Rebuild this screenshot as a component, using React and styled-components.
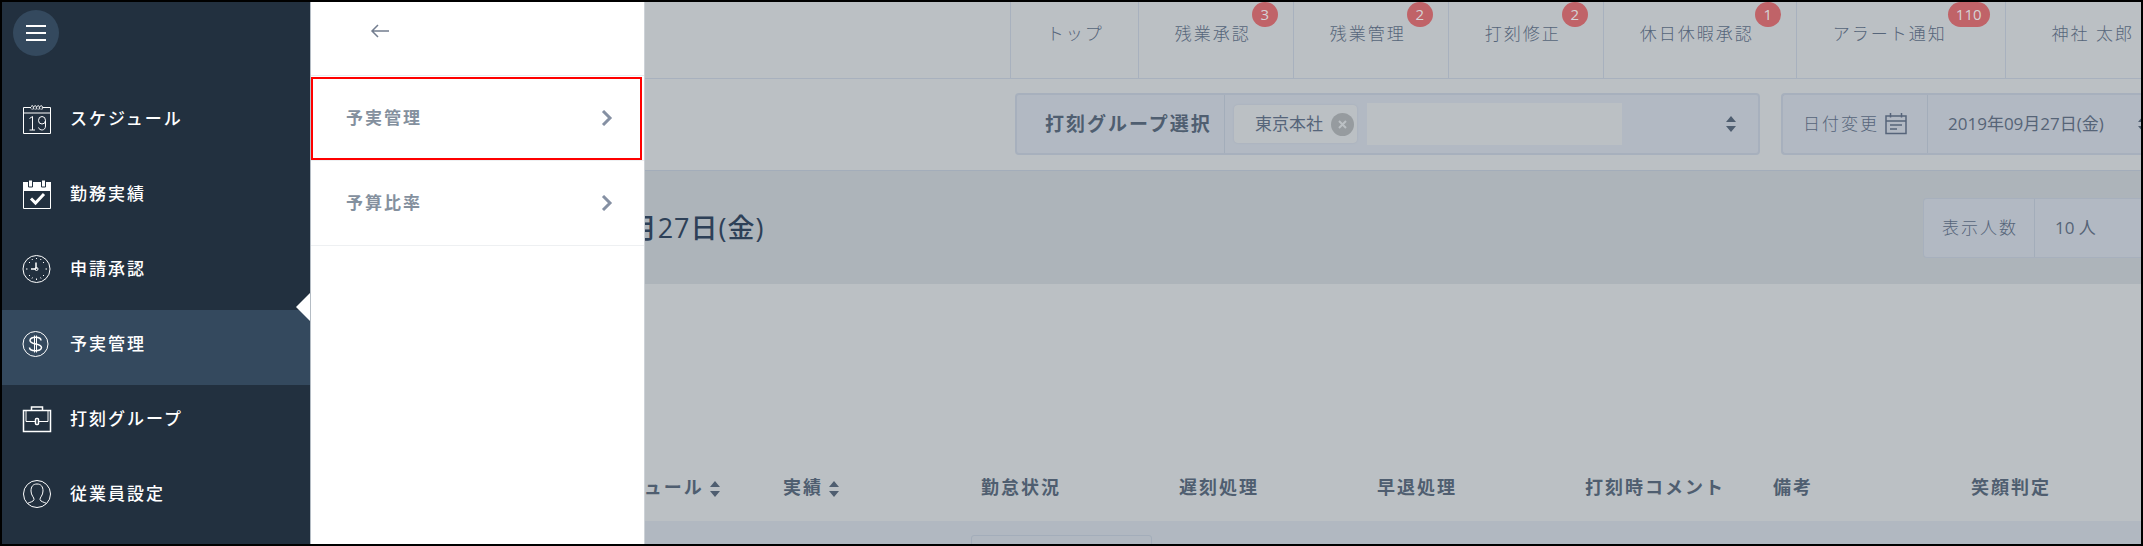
import styled, { createGlobalStyle, css } from "styled-components";

const menuItems = [
  { label: "スケジュール", Icon: ScheduleIcon },
  { label: "勤務実績", Icon: RecordIcon },
  { label: "申請承認", Icon: ClockIcon },
  { label: "予実管理", Icon: DollarIcon, active: true },
  { label: "打刻グループ", Icon: BagIcon },
  { label: "従業員設定", Icon: PersonIcon },
];

const subItems = [{ label: "予実管理", marked: true }, { label: "予算比率" }];

const topLinks = [
  { label: "トップ" },
  { label: "残業承認", count: 3 },
  { label: "残業管理", count: 2 },
  { label: "打刻修正", count: 2 },
  { label: "休日休暇承認", count: 1 },
  { label: "アラート通知", count: 110 },
];

const columns = [
  { label: "スケジュール", sort: true },
  { label: "実績", sort: true },
  { label: "勤怠状況" },
  { label: "遅刻処理" },
  { label: "早退処理" },
  { label: "打刻時コメント", indent: true },
  { label: "備考" },
  { label: "笑顔判定" },
];

function ScheduleIcon() {
  return (
    <MenuSvg viewBox="0 0 30 30">
      <path d="M9 3.5H1.5v26h27v-26H21M1.5 9h27" />
      <path d="M9 2.5c2-2 3 0 2 3M12 2.5c2-2 3 0 2 3M15 2.5c2-2 3 0 2 3M18 2.5c2-2 3 0 2 3M9 4.5l1 1M12 4.5l1 1M15 4.5l1 1M18 4.5l1 1" />
      <path d="M7.5 14.5l3-2V26M7.5 26h5.500M23.500 16.500a3.500 4 0 1 0-7 0a3.500 3.500 0 1 0 7 0v5.500c0 5-6 5-7 1.500" />
    </MenuSvg>
  );
}

function RecordIcon() {
  return (
    <MenuSvg viewBox="0 0 30 30">
      <path d="M1.500 4h27v25.500h-27z" />
      <path d="M1 3h28v9H1z" fill="#fff" stroke="none" />
      <path d="M6.500 1h4v7h-4zM19.500 1h4v7h-4z" fill="#fff" stroke="#22303f" />
      <path d="M9 19.500l4.500 4.500 8.500-9" strokeWidth="3" />
    </MenuSvg>
  );
}

function ClockIcon() {
  return (
    <MenuSvg viewBox="0 0 30 30">
      <circle cx="14.500" cy="15" r="13.500" />
      <path d="M14 8.500v6.500M9 15h5" strokeWidth="1.500" />
      <circle cx="14.500" cy="15" r="1.500" />
      <path
        d="M14.500 24.500v1.500M14.500 4v1M4 15h1.500M23.500 15H25M7 8l1 1M21 9l1-1M7 22l1-1M21 21l1 1M10 5l.5 1M19 5l-.5 1M10 24.500l.5-1M19 24.500l-.5-1"
      />
    </MenuSvg>
  );
}

function DollarIcon() {
  return (
    <MenuSvg viewBox="0 0 30 30">
      <circle cx="13.500" cy="15" r="12.500" />
      <path d="M12.500 6.500v17M14.500 6.500v17" />
      <path d="M19 11.500c0-4-11-4.500-11 0 0 4.500 11.500 2.500 11.500 7 0 4.500-12 4-12 0" strokeWidth="1.500" />
    </MenuSvg>
  );
}

function BagIcon() {
  return (
    <MenuSvg viewBox="0 0 30 30">
      <path d="M1.500 6.500h27v21h-27zM9.500 6V3h11v3" strokeWidth="1.500" />
      <path d="M4 7v10.500h9M16.500 17.500H26V7" />
      <rect x="13.500" y="14.500" width="3" height="6" rx="1" strokeWidth="1.500" />
    </MenuSvg>
  );
}

function PersonIcon() {
  return (
    <MenuSvg viewBox="0 0 30 30">
      <circle cx="15" cy="15" r="13.500" />
      <path d="M5.500 24.500c2-1.500 6-1.500 6.500-4 .3-2-3-4-3-8.500C9 7.500 11 5 15 5s6 2.500 6 7c0 4.500-3.300 6.500-3 8.500.5 2.500 4.500 2.500 6.500 4" />
    </MenuSvg>
  );
}

const SortIcon = () => (
  <SortSvg viewBox="0 0 10 16">
    <path d="M5 0l5 6H0zM5 16l5-6H0z" />
  </SortSvg>
);

const App = () => {
  return (
    <Page>
      <GlobalStyle />
      <Sidebar>
        <Burger aria-label="メニュー">
          <svg width="20" height="18" viewBox="0 0 20 18">
            <path d="M0 2h20M0 9h20M0 16h20" stroke="#fff" strokeWidth="2" />
          </svg>
        </Burger>
        <Menu>
          {menuItems.map(({ label, Icon, active }) => (
            <MenuLink href="#" key={label} $active={active}>
              <Icon />
              {label}
            </MenuLink>
          ))}
        </Menu>
      </Sidebar>

      <Content>
        <SubMenu>
          <SubHead>
            <BackButton aria-label="戻る">
              <svg width="20" height="14" viewBox="0 0 20 14" fill="none" stroke="#737d8f">
                <path d="M19 7H2M8 1L2 7l6 6" strokeWidth="1.500" />
              </svg>
            </BackButton>
          </SubHead>
          {subItems.map(({ label, marked }) => (
            <SubLink href="#" key={label} $marked={marked}>
              {label}
              <svg width="12" height="16" viewBox="0 0 12 16" fill="none" stroke="#8590a3">
                <path d="M2 1l7 7-7 7" strokeWidth="3" />
              </svg>
            </SubLink>
          ))}
        </SubMenu>

        <TopNav>
          {topLinks.map(({ label, count }) => (
            <TopLink href="#" key={label} $badge={count}>
              <span>{label}</span>
              {count && <Badge>{count}</Badge>}
            </TopLink>
          ))}
          <UserLink href="#">
            <span>神社 太郎</span>
          </UserLink>
        </TopNav>

        <Toolbar>
          <GroupBox>
            <GroupLabel htmlFor="group">打刻グループ選択</GroupLabel>
            <Chip>
              東京本社
              <ChipClose aria-label="削除">
                <svg width="9" height="9" viewBox="0 0 9 9">
                  <path d="M1 1l7 7M8 1L1 8" stroke="#bbc0c4" strokeWidth="2" />
                </svg>
              </ChipClose>
            </Chip>
            <GroupInput id="group" type="text" />
            <SortIcon />
          </GroupBox>
          <DateBox>
            <DateLabel htmlFor="date">
              日付変更
              <svg width="22" height="22" viewBox="0 0 22 22" fill="none" stroke="#56647a">
                <path d="M1 3h20v17.500H1zM1 8h20M5.500 0v4.500M16.500 0v4.500" strokeWidth="1.500" />
                <path d="M5 12h12M5 16h7" strokeWidth="1.500" />
              </svg>
            </DateLabel>
            <Select id="date">
              <option>2019年09月27日(金)</option>
            </Select>
            <SortIcon />
          </DateBox>
        </Toolbar>

        <TitleBar>
          <Title>2019年09月27日(金)</Title>
          <CountBox>
            <CountLabel htmlFor="count">表示人数</CountLabel>
            <Select id="count">
              <option>10 人</option>
            </Select>
          </CountBox>
        </TitleBar>

        <Table>
          <thead>
            <tr>
              <Th $first />
              {columns.map(({ label, sort, indent }) => (
                <Th key={label} $indent={indent}>
                  {label}
                  {sort && <SortIcon />}
                </Th>
              ))}
            </tr>
          </thead>
          <tbody>
            <tr>
              <Td colSpan={3} />
              <Td colSpan={6}>
                <StatusSelect aria-label="勤怠状況" />
              </Td>
            </tr>
          </tbody>
        </Table>
      </Content>
    </Page>
  );
};

export default App;

const GlobalStyle = createGlobalStyle`
  * {
    box-sizing: border-box;
  }
  body {
    margin: 0;
    font-family: "Open Sans", "Noto Sans CJK JP", sans-serif;
    font-size: 17px;
    line-height: 24px;
  }
  a {
    color: inherit;
    text-decoration: none;
  }
  button, input, select {
    margin: 0;
    padding: 0;
    border: 0;
    font: inherit;
    color: inherit;
  }
`;

const Page = styled.div`
  display: flex;
  height: 100vh;
  border: 2px solid #000;
  overflow: hidden;
  background: #bbc0c4;
  color: #56657a;
`;

const Sidebar = styled.aside`
  flex: 0 0 308px;
  background: #22303f;
  color: #fff;
`;

const Burger = styled.button`
  display: flex;
  align-items: center;
  justify-content: center;
  width: 46px;
  height: 46px;
  margin: 8px 0 29px 11px;
  border-radius: 50%;
  background: #34495e;
`;

const Menu = styled.nav`
  display: flex;
  flex-direction: column;
`;

const MenuLink = styled.a`
  position: relative;
  display: flex;
  align-items: center;
  gap: 18px;
  height: 75px;
  padding: 0 0 7px 20px;
  font-weight: 500;
  letter-spacing: 2px;

  ${({ $active }) =>
    $active &&
    css`
      background: #34495e;

      &::after {
        content: "";
        position: absolute;
        top: -17px;
        right: 0;
        border: 14px solid transparent;
        border-right-color: #fff;
        border-left: 0;
      }
    `}
`;

const MenuSvg = styled.svg`
  width: 30px;
  height: 30px;
  fill: none;
  stroke: #fff;
`;

const Content = styled.main`
  position: relative;
  flex: 1;
  min-width: 0;
  overflow: hidden;
`;

const SubMenu = styled.nav`
  position: absolute;
  top: 0;
  left: 0;
  z-index: 1;
  width: 335px;
  height: 100%;
  background: #fff;
  border-left: 1px solid #b4bcc4;
  border-right: 1px solid #cdd2d7;
`;

const SubHead = styled.div`
  height: 74px;
  padding: 20px 0 0 59px;
  border-bottom: 1px solid #e8ebf0;
`;

const BackButton = styled.button`
  display: flex;
  align-items: center;
  height: 18px;
  background: none;
`;

const SubLink = styled.a`
  position: relative;
  display: flex;
  align-items: center;
  justify-content: space-between;
  height: 85px;
  padding: 0 31px 0 35px;
  border-bottom: 1px solid #eef0f2;
  color: #84909e;
  font-weight: 700;
  letter-spacing: 2px;

  ${({ $marked }) =>
    $marked &&
    css`
      &::after {
        content: "";
        position: absolute;
        inset: 1px 2px 0 0;
        border: 2px solid #f00;
      }
    `}
`;

const TopNav = styled.nav`
  display: flex;
  justify-content: flex-end;
  height: 77px;
  border-bottom: 1px solid #a8b1be;
  font-weight: 300;
  letter-spacing: 2px;
`;

const TopLink = styled.a`
  display: flex;
  align-items: flex-start;
  gap: 1px;
  padding: 0 ${({ $badge }) => ($badge ? 15 : 34)}px 0 36px;
  border-left: 1px solid #a8b1be;
  white-space: nowrap;

  span {
    padding-top: 20px;
  }
`;

const UserLink = styled(TopLink)`
  padding: 0 7px 0 46px;
`;

const Badge = styled.b`
  min-width: 26px;
  height: 25px;
  padding: 0 8px;
  border-radius: 13px;
  background: #c06368;
  color: #d5d3d6;
  font-size: 15px;
  font-weight: 400;
  letter-spacing: 0;
  text-align: center;
`;

const Toolbar = styled.div`
  display: flex;
  justify-content: flex-end;
  gap: 21px;
  height: 92px;
  padding-top: 14px;
  border-bottom: 1px solid #a3adba;
`;

const Box = styled.div`
  display: flex;
  align-items: center;
  height: 62px;
  border: 2px solid #a7b0bd;
  border-radius: 4px;
  background: #b2b9c3;
`;

const GroupBox = styled(Box)`
  flex: 0 0 745px;
  padding-right: 22px;

  > svg {
    margin-left: auto;
  }
`;

const Label = styled.label`
  display: flex;
  align-items: center;
  align-self: stretch;
  flex: none;
  border-right: 1px solid #a3adba;
  font-weight: 300;
  letter-spacing: 2px;
`;

const GroupLabel = styled(Label)`
  width: 208px;
  padding-left: 28px;
  color: #4f5e70;
  font-size: 19px;
  font-weight: 700;
`;

const Chip = styled.span`
  display: flex;
  align-items: center;
  justify-content: space-between;
  width: 123px;
  height: 38px;
  margin: 0 10px 0 9px;
  padding: 0 3px 0 21px;
  border-radius: 4px;
  background: #bbc0c4;
  box-shadow: 0 0 2px #a3adba;
`;

const ChipClose = styled.button`
  display: flex;
  align-items: center;
  justify-content: center;
  width: 23px;
  height: 23px;
  border-radius: 50%;
  background: #969b9f;
`;

const GroupInput = styled.input`
  width: 255px;
  height: 42px;
  background: #bbc0c4;
`;

const DateBox = styled(Box)`
  flex: 0 0 360px;
  border-right: 0;
  border-radius: 4px 0 0 4px;
  overflow: hidden;

  > svg {
    flex: none;
  }
`;

const DateLabel = styled(Label)`
  gap: 6px;
  width: 145px;
  padding-left: 20px;
`;

const Select = styled.select`
  flex: none;
  width: 190px;
  margin-left: 20px;
  appearance: none;
  background: none;
  color: #566477;
`;

const SortSvg = styled.svg`
  width: 10px;
  height: 16px;
  fill: #4f5e70;
`;

const TitleBar = styled.div`
  display: flex;
  align-items: center;
  justify-content: space-between;
  height: 113px;
  background: #adb4ba;
`;

const Title = styled.h1`
  margin: 0 0 0 193px;
  color: #2d4057;
  font-size: 27px;
  font-weight: 500;
  letter-spacing: 1px;
`;

const CountBox = styled(Box)`
  flex: 0 0 218px;
  height: 60px;
  border-width: 1px 0 1px 1px;
  border-radius: 4px 0 0 4px;
  overflow: hidden;
`;

const CountLabel = styled(Label)`
  width: 111px;
  padding-left: 18px;
`;

const Table = styled.table`
  width: 100%;
  margin-top: 160px;
  border-collapse: collapse;
  table-layout: fixed;
`;

const Th = styled.th`
  width: ${({ $first }) => ($first ? 275 : 198)}px;
  height: 77px;
  padding: 8px 0 0 ${({ $indent }) => ($indent ? 10 : 0)}px;
  color: #4f5e70;
  font-size: 18px;
  font-weight: 700;
  letter-spacing: 2px;
  text-align: left;
  white-space: nowrap;

  svg {
    margin-left: 6px;
    vertical-align: -3px;
  }
`;

const Td = styled.td`
  height: 92px;
  padding: 14px 0 0;
  background: #b1b8c1;
  vertical-align: top;
`;

const StatusSelect = styled.select`
  display: block;
  width: 181px;
  height: 42px;
  margin-left: -10px;
  border: 1px solid #a3adba;
  border-radius: 3px;
  appearance: none;
  background: none;
`;
